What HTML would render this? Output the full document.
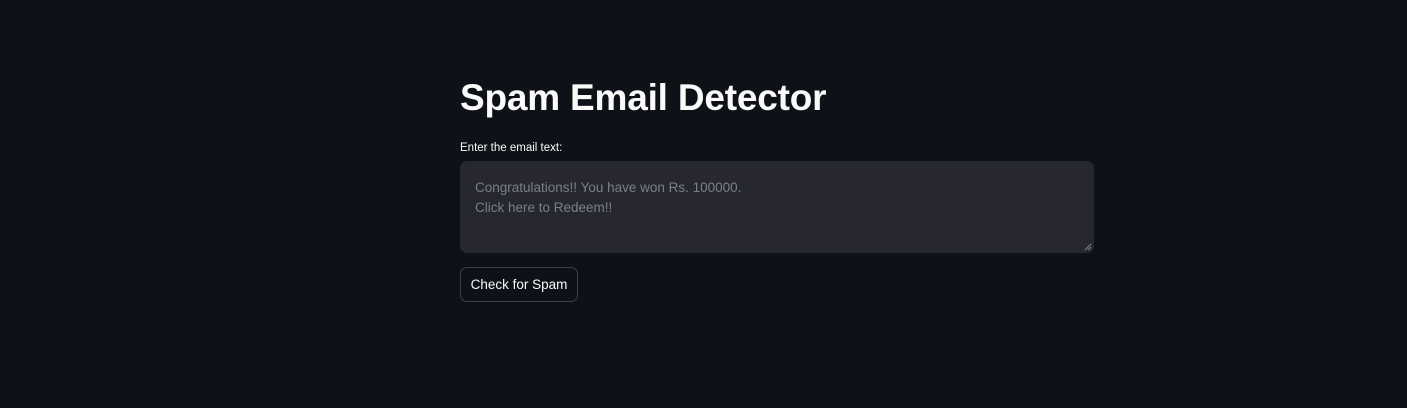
<!DOCTYPE html>
<html><head><style>
body{margin:0;background:#0e1117;width:1407px;height:408px;overflow:hidden;font-family:"Liberation Sans",sans-serif;position:relative}
h1{position:absolute;left:460px;top:77px;margin:0;color:#fafafa;font-size:37px;font-weight:700;letter-spacing:-0.2px;white-space:nowrap}
.lbl{position:absolute;left:460px;top:142px;color:#fafafa;font-size:11.5px}
.ta{position:absolute;left:460px;top:161px;width:634px;height:92px;background:#262730;border-radius:7px}
.ta div{position:absolute;left:15px;top:17px;color:#7d7f87;font-size:13.5px;line-height:20px}
.btn{position:absolute;left:460px;top:267px;width:116px;height:33px;border:1px solid #3e4049;border-radius:7px;color:#fafafa;font-size:13.5px;line-height:33px;text-align:center}
</style></head><body>
<h1>Spam Email Detector</h1>
<div class="lbl">Enter the email text:</div>
<div class="ta"><div>Congratulations!! You have won Rs. 100000.<br>Click here to Redeem!!</div>
<svg style="position:absolute;right:2px;bottom:2px" width="8" height="8"><path d="M7 1L1 7M7 4L4 7" stroke="#888" stroke-width="1"/></svg></div>
<div class="btn">Check for Spam</div>
</body></html>
